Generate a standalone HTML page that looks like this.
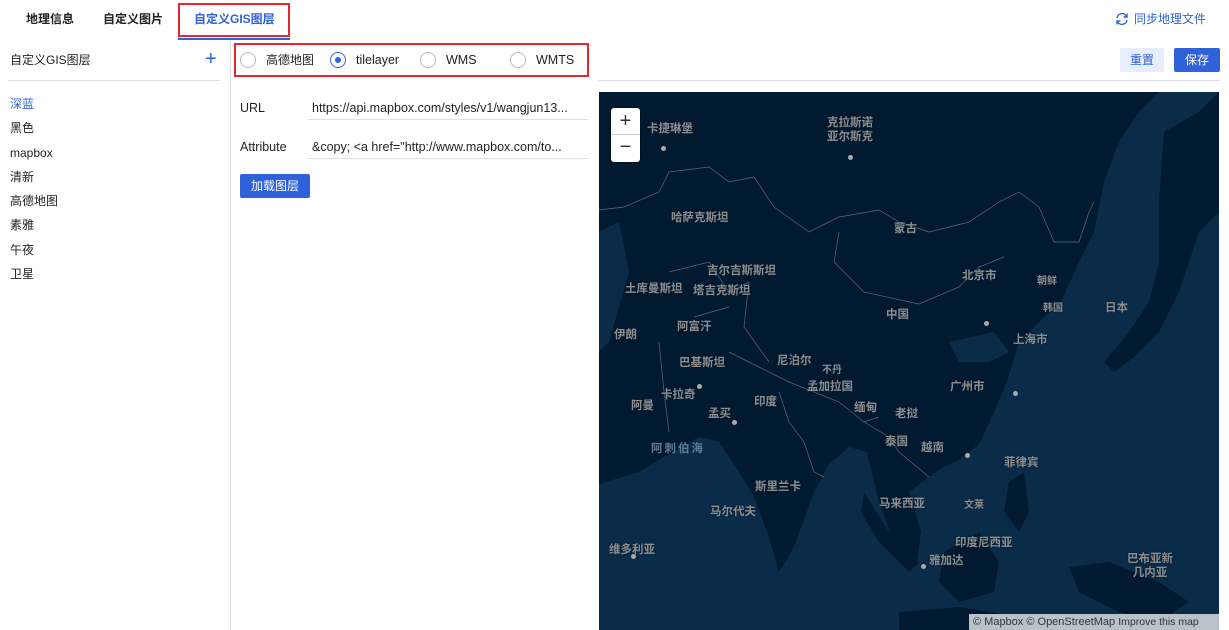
<!DOCTYPE html>
<html><head><meta charset="utf-8"><style>
*{margin:0;padding:0;box-sizing:border-box}
body{width:1229px;height:630px;overflow:hidden;background:#fff;font-family:"Liberation Sans","Noto Sans CJK SC",sans-serif;color:#222;position:relative;font-size:12px}
.a{position:absolute;white-space:nowrap}
.tab{font-size:12px;font-weight:bold;color:#222;top:11px;line-height:16px}
.lab{position:absolute;color:#8d8d8d;font-weight:bold;font-size:11.5px;white-space:nowrap;text-shadow:0 0 2px #021a30}
.dot{position:absolute;width:5px;height:5px;border-radius:50%;background:#aaa}
.radio{position:absolute;top:52px;width:16px;height:16px;border:1px solid #bbb;border-radius:50%;background:#fff}
.rl{position:absolute;top:52px;line-height:16px;font-size:12.5px;white-space:nowrap}
</style></head><body>
<div class="a tab" style="left:26px">地理信息</div>
<div class="a tab" style="left:103px">自定义图片</div>
<div class="a tab" style="left:194px;color:#2f62d8">自定义GIS图层</div>
<div class="a" style="left:178px;top:3px;width:112px;height:34px;border:2px solid #e8262e"></div>
<div class="a" style="left:178px;top:38px;width:112px;height:2px;background:#2f62d8"></div>
<svg class="a" style="left:1115px;top:12px" width="14" height="14" viewBox="0 0 14 14" fill="none" stroke="#2f62d8" stroke-width="1.4"><path d="M2 6 A5 5 0 0 1 11.5 4.5"/><path d="M12 1.5v3.5H8.5"/><path d="M12 8 A5 5 0 0 1 2.5 9.5"/><path d="M2 12.5V9h3.5"/></svg>
<div class="a" style="left:1134px;top:11px;font-size:12px;line-height:16px;color:#2f62d8">同步地理文件</div>

<div class="a" style="left:10px;top:52px;font-size:12px;line-height:16px">自定义GIS图层</div>
<div class="a" style="left:205px;top:47px;font-size:20px;line-height:24px;color:#2f62d8;font-weight:300">+</div>
<div class="a" style="left:8px;top:80px;width:212px;height:1px;background:#dde0e6"></div>
<div class="a" style="left:230px;top:40px;width:1px;height:590px;background:#dde0e6"></div>
<div class="a" style="left:10px;top:92px;line-height:24.3px;font-size:12px"><span style="color:#2f62d8">深蓝</span><br>黑色<br>mapbox<br>清新<br>高德地图<br>素雅<br>午夜<br>卫星</div>

<div class="a" style="left:234px;top:43px;width:355px;height:34px;border:2px solid #e8262e"></div>
<div class="radio" style="left:240px"></div><div class="rl" style="left:266px;font-size:12px">高德地图</div>
<div class="radio" style="left:330px;border-color:#2f62d8"><div style="position:absolute;left:4px;top:4px;width:6px;height:6px;border-radius:50%;background:#2f62d8"></div></div><div class="rl" style="left:356px">tilelayer</div>
<div class="radio" style="left:420px"></div><div class="rl" style="left:446px">WMS</div>
<div class="radio" style="left:510px"></div><div class="rl" style="left:536px">WMTS</div>
<div class="a" style="left:598px;top:80px;width:622px;height:1px;background:#dde0e6"></div>
<div class="a" style="left:1120px;top:48px;width:44px;height:24px;background:#e6eefc;border-radius:2px;color:#2f62d8;text-align:center;line-height:24px;font-size:12px">重置</div>
<div class="a" style="left:1174px;top:48px;width:46px;height:24px;background:#2f62d8;border-radius:2px;color:#fff;text-align:center;line-height:24px;font-size:12px">保存</div>

<div class="a" style="left:240px;top:101px;font-size:12.5px">URL</div>
<div class="a" style="left:308px;top:96px;width:280px;height:24px;border-bottom:1px solid #dde0e6;padding-left:4px;line-height:24px;font-size:12.5px;overflow:hidden">https://api.mapbox.com/styles/v1/wangjun13...</div>
<div class="a" style="left:240px;top:140px;font-size:12.5px">Attribute</div>
<div class="a" style="left:308px;top:135px;width:280px;height:24px;border-bottom:1px solid #dde0e6;padding-left:4px;line-height:24px;font-size:12.5px;overflow:hidden">&amp;copy; &lt;a href="http://www.mapbox.com/to...</div>
<div class="a" style="left:240px;top:174px;width:70px;height:24px;background:#2f62d8;border-radius:2px;color:#fff;text-align:center;line-height:24px;font-size:12px">加载图层</div>

<div class="a" style="left:599px;top:92px;width:620px;height:538px;overflow:hidden;background:#021a30">
<svg width="620" height="538" viewBox="0 0 620 538" style="position:absolute;left:0;top:0">
<path fill="#0a2c48" d="M0 392 L40 380 L60 368 L100 345 L120 350 L135 372 L155 405 L170 445 L180 480 L195 455 L215 400 L230 372 L250 355 L268 360 L280 410 L298 460 L318 470 L322 440 L310 400 L330 385 L345 375 L360 368 L380 352 L395 320 L408 290 L420 250 L440 230 L462 210 L480 170 L495 140 L505 90 L520 50 L540 20 L560 0 L620 0 L620 538 L0 538Z"/>
<path fill="#021a30" d="M565 40 L600 20 L620 0 L620 120 L600 140 L580 200 L560 240 L535 265 L515 280 L505 270 L530 240 L550 210 L560 170 L560 110Z"/>
<path fill="#021a30" d="M345 460 L380 440 L400 470 L395 500 L360 510 L340 490Z"/>
<path fill="#021a30" d="M265 400 L290 440 L320 470 L310 480 L280 450 L262 420Z"/>
<path fill="#021a30" d="M300 520 L360 515 L420 525 L420 538 L300 538Z"/>
<path fill="#021a30" d="M470 475 L510 470 L560 490 L590 510 L560 530 L520 520 L480 500Z"/>
<path fill="#021a30" d="M410 390 L425 380 L430 420 L420 440 L405 420Z"/>
<path fill="#021a30" d="M0 330 L40 350 L35 375 L0 385Z"/>
<path fill="#0a2c48" d="M0 140 L20 130 L30 180 L10 250 L0 260Z"/>
<path fill="#0a2c48" d="M350 250 L395 240 L410 260 L390 270 L360 270Z"/>
<path fill="none" stroke="#6f7d8c" stroke-width=".7" opacity=".8" d="M0 118 L25 115 L60 100 L70 80 L110 75 L130 90 L155 85 L175 115 L210 140 L240 125 L280 118 L300 130 L330 140 L370 130 L400 110 L420 100 L440 115 L455 150 L480 150 L490 120 L495 110 M240 140 L235 170 L265 200 L320 212 L360 195 L380 175 L405 165 M130 260 L160 275 L190 290 L215 300 L240 310 L265 330 L280 325 M150 190 L145 235 L170 270 M60 250 L65 300 L70 340 M180 300 L190 330 L205 350 L215 380 L225 385 M70 180 L110 170 L130 200 L150 190 M265 330 L290 345 L300 360 L330 385 M95 225 L130 215"/>
</svg>
<div style="position:absolute;left:12px;top:16px;width:29px;height:54px;background:#fff;border-radius:3px;box-shadow:0 0 0 1px rgba(0,0,0,.2)">
<div style="height:27px;border-bottom:1px solid #ccc;text-align:center;font-size:20px;line-height:26px;color:#333">+</div>
<div style="text-align:center;font-size:20px;line-height:24px;color:#333">−</div></div>
<div class="lab" style="left:48px;top:28px">卡捷琳堡</div>
<div class="lab" style="left:228px;top:24px;line-height:14px;text-align:center">克拉斯诺<br>亚尔斯克</div>
<div class="lab" style="left:72px;top:117px">哈萨克斯坦</div>
<div class="lab" style="left:295px;top:128px">蒙古</div>
<div class="lab" style="left:108px;top:170px">吉尔吉斯斯坦</div>
<div class="lab" style="left:26px;top:188px">土库曼斯坦</div><div class="lab" style="left:94px;top:190px">塔吉克斯坦</div>
<div class="lab" style="left:363px;top:175px">北京市</div>
<div class="lab" style="left:438px;top:180px;font-size:10px">朝鲜</div>
<div class="lab" style="left:444px;top:207px;font-size:10px">韩国</div>
<div class="lab" style="left:506px;top:207px">日本</div>
<div class="lab" style="left:287px;top:214px">中国</div>
<div class="lab" style="left:78px;top:226px">阿富汗</div>
<div class="lab" style="left:15px;top:234px">伊朗</div>
<div class="lab" style="left:414px;top:239px">上海市</div>
<div class="lab" style="left:80px;top:262px">巴基斯坦</div>
<div class="lab" style="left:178px;top:260px">尼泊尔</div>
<div class="lab" style="left:223px;top:269px;font-size:10px">不丹</div>
<div class="lab" style="left:208px;top:286px">孟加拉国</div>
<div class="lab" style="left:351px;top:286px">广州市</div>
<div class="lab" style="left:62px;top:294px">卡拉奇</div>
<div class="lab" style="left:155px;top:301px">印度</div>
<div class="lab" style="left:32px;top:305px">阿曼</div>
<div class="lab" style="left:255px;top:307px">缅甸</div>
<div class="lab" style="left:109px;top:313px">孟买</div>
<div class="lab" style="left:296px;top:313px">老挝</div>
<div class="lab" style="left:52px;top:348px;color:#5e7d96;letter-spacing:2px;text-shadow:none">阿刺伯海</div>
<div class="lab" style="left:286px;top:341px">泰国</div>
<div class="lab" style="left:322px;top:347px">越南</div>
<div class="lab" style="left:405px;top:362px">菲律宾</div>
<div class="lab" style="left:156px;top:386px">斯里兰卡</div>
<div class="lab" style="left:280px;top:403px">马来西亚</div>
<div class="lab" style="left:365px;top:404px;font-size:10px">文莱</div>
<div class="lab" style="left:111px;top:411px">马尔代夫</div>
<div class="lab" style="left:356px;top:442px">印度尼西亚</div>
<div class="lab" style="left:10px;top:449px">维多利亚</div>
<div class="lab" style="left:330px;top:460px">雅加达</div>
<div class="lab" style="left:528px;top:460px;line-height:14px;text-align:center">巴布亚新<br>几内亚</div>
<div class="dot" style="left:62px;top:54px"></div><div class="dot" style="left:249px;top:63px"></div>
<div class="dot" style="left:98px;top:292px"></div><div class="dot" style="left:133px;top:328px"></div>
<div class="dot" style="left:414px;top:299px"></div><div class="dot" style="left:366px;top:361px"></div>
<div class="dot" style="left:32px;top:462px"></div><div class="dot" style="left:385px;top:229px"></div>
<div class="dot" style="left:322px;top:472px"></div>
<div style="position:absolute;right:0;bottom:0;width:250px;height:16px;background:#b9c1c9;color:#333;font-size:11px;line-height:16px;padding-left:4px">© Mapbox © OpenStreetMap <span style="font-size:10.5px">Improve this map</span></div>
</div>
</body></html>
